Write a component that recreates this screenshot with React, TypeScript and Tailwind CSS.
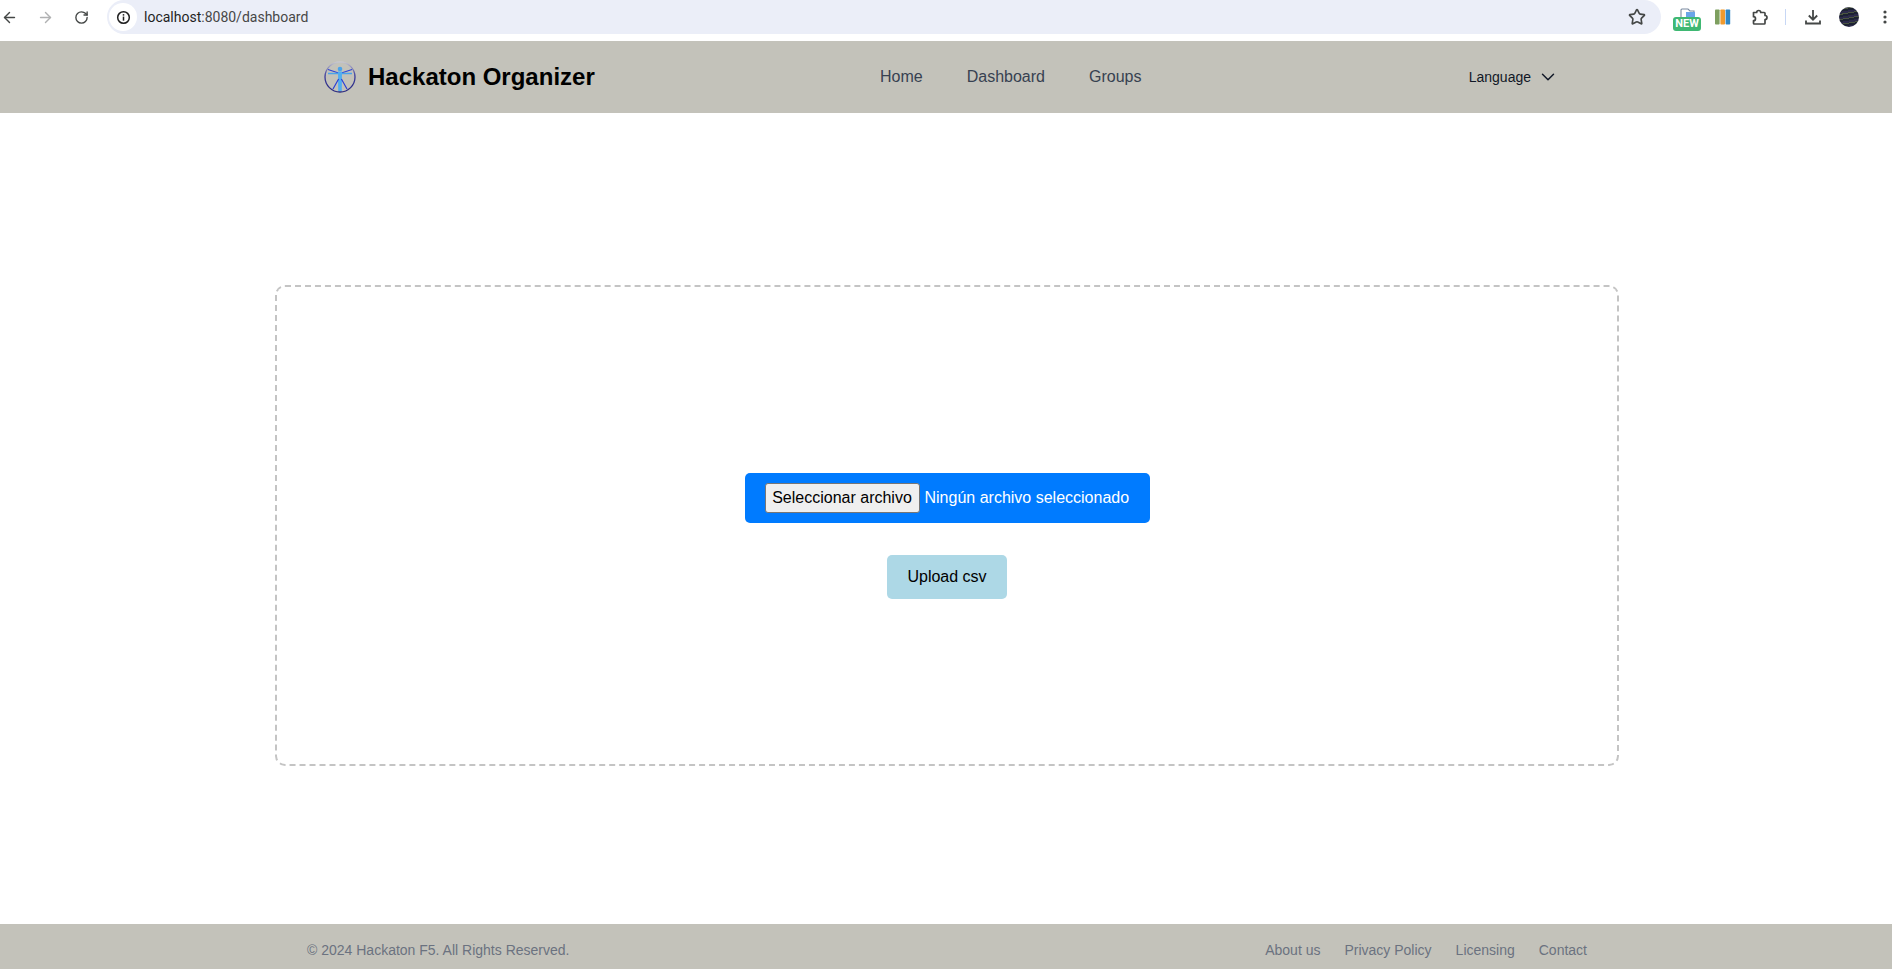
import { ArrowLeft, ArrowRight, RotateCw, Star, ChevronDown } from 'lucide-react';

function BrowserBar() {
  return (
    <div className="h-[41px] pb-[7px] bg-white flex items-center shrink-0 font-['Roboto',sans-serif]">
      <div className="w-[107px] pl-[1px] flex items-center shrink-0">
        <ArrowLeft size={17} strokeWidth={2} className="text-[#444746]" />
        <ArrowRight size={17} strokeWidth={2} className="text-[#b0b1b2] ml-[19px]" />
        <RotateCw size={15} strokeWidth={2.2} className="text-[#444746] ml-[20px]" />
      </div>
      <div className="w-[1554px] h-[34px] rounded-r-full rounded-l-full bg-[#ebeef8] flex items-center pl-[2px] pr-[15px] shrink-0">
        <div className="w-[28px] h-[28px] rounded-full bg-white flex items-center justify-center shrink-0">
          <svg width="15" height="15" viewBox="0 0 16 16" fill="none">
            <circle cx="8" cy="8" r="6.2" stroke="#1f1f1f" strokeWidth="1.6" />
            <rect x="7.2" y="7" width="1.6" height="4.4" fill="#1f1f1f" />
            <rect x="7.2" y="4.4" width="1.6" height="1.6" fill="#1f1f1f" />
          </svg>
        </div>
        <div className="ml-[7px] text-[14px] text-[#1f1f1f]">
          localhost<span className="text-[#474747]">:8080/dashboard</span>
        </div>
        <Star size={18} strokeWidth={2.2} className="ml-auto text-[#444746]" />
      </div>
      {/* extension icons */}
      <div className="ml-[12px] relative w-[28px] h-[28px] shrink-0">
        <svg width="16" height="10" viewBox="0 0 16 10" className="absolute left-[7px] top-[5px]">
          <path d="M1 9V2a1 1 0 0 1 1-1h6l2 2h4v6" fill="none" stroke="#7a8aa0" strokeWidth="1.1" />
          <rect x="6" y="4" width="9" height="6" fill="#6aa5e8" />
        </svg>
        <div className="absolute left-0 top-[14px] w-[28px] h-[14px] rounded-[3px] bg-[#3fb873] text-white text-[11px] leading-[14px] font-bold text-center">
          NEW
        </div>
      </div>
      <svg width="16" height="16" viewBox="0 0 16 16" className="ml-[14px] shrink-0">
        <rect x="0" y="0.5" width="4.6" height="15" rx="0.8" fill="#7d9f5f" />
        <rect x="5.4" y="0.5" width="4.6" height="15" rx="0.8" fill="#f09a2e" />
        <rect x="10.6" y="0.5" width="4.6" height="15" rx="0.8" fill="#2f86c5" />
      </svg>
      <svg width="16" height="16" viewBox="0 0 16 16" fill="none" className="ml-[21px] shrink-0">
        <path
          d="M1.5 3.5h3.2a2 2 0 0 1 4 0h3.5a.8.8 0 0 1 .8.8V6.5a2 2 0 0 1 0 4v3.7a.8.8 0 0 1-.8.8H2.3a.8.8 0 0 1-.8-.8v-2.5a2 2 0 0 0 0-4z"
          stroke="#444746"
          strokeWidth="1.7"
          strokeLinejoin="round"
        />
      </svg>
      <div className="w-[1px] h-[16px] bg-[#c7d7f5] ml-[17px] shrink-0" />
      <svg width="16" height="16" viewBox="0 0 16 16" fill="none" className="ml-[19px] shrink-0">
        <path d="M8 1v9.5M3.8 6.5 8 10.7l4.2-4.2" stroke="#444746" strokeWidth="1.8" />
        <path d="M1 11.5v3h14v-3" stroke="#444746" strokeWidth="1.8" />
      </svg>
      <div className="w-[20px] h-[20px] rounded-full bg-[repeating-linear-gradient(170deg,#2c2a4a_0px,#2c2a4a_2px,#4a5540_2px,#4a5540_3px,#1d2233_3px,#1d2233_5px)] ml-[18px] shrink-0" />
      <svg width="4" height="14" viewBox="0 0 4 14" className="ml-[24px] shrink-0">
        <circle cx="2" cy="2" r="1.6" fill="#444746" />
        <circle cx="2" cy="7" r="1.6" fill="#444746" />
        <circle cx="2" cy="12" r="1.6" fill="#444746" />
      </svg>
    </div>
  );
}

function Logo() {
  return (
    <svg width="34" height="34" viewBox="0 0 34 34" fill="none">
      <defs>
        <linearGradient id="ring" x1="0" y1="0" x2="0" y2="1">
          <stop offset="0" stopColor="#c9c9cf" />
          <stop offset="0.45" stopColor="#3a3a9c" />
          <stop offset="1" stopColor="#2a2a80" />
        </linearGradient>
      </defs>
      <circle cx="17" cy="17" r="15" stroke="url(#ring)" strokeWidth="1.3" />
      <path d="M5 9.5 L17 13.5 L29 9.5" stroke="#2a3fd8" strokeWidth="1.1" />
      <path d="M5 13.5 H29" stroke="#4aa3ea" strokeWidth="1.5" />
      <circle cx="17" cy="9" r="2.3" fill="#4aa3ea" />
      <path d="M15 11.5 H19 L18.8 31 H15.2 Z" fill="#52aef0" />
      <path d="M15.6 19 L10 29 M18.4 19 L24 29" stroke="#2a3fd8" strokeWidth="1.2" />
    </svg>
  );
}

export default function App() {
  return (
    <div className="h-[969px] flex flex-col bg-white overflow-hidden font-['Liberation_Sans',Arial,sans-serif]">
      <BrowserBar />

      <header className="h-[72px] bg-[#c3c2ba] shrink-0 flex items-center justify-center">
        <div className="w-[1280px] ml-[2px] flex items-center">
          <div className="w-[573px] flex items-center pl-[16px] shrink-0">
            <Logo />
            <span className="ml-[11px] text-2xl font-semibold text-black whitespace-nowrap">Hackaton Organizer</span>
          </div>
          <nav className="flex items-center gap-[44px] text-base text-[#374151]">
            <a>Home</a>
            <a>Dashboard</a>
            <a>Groups</a>
          </nav>
          <div className="ml-auto mr-[28px] flex items-center text-sm text-[#111827]">
            Language
            <ChevronDown size={22} strokeWidth={1.6} className="ml-[6px]" />
          </div>
        </div>
      </header>

      <main className="flex-1 flex items-center justify-center pt-[13px] pl-[2px]">
        <div className="w-[1344px] h-[481px] pt-[21px] border-2 border-dashed border-[#c4c4c4] rounded-[10px] flex flex-col items-center justify-center">
          <div className="w-[405px] h-[50px] pl-[20px] bg-[#007bff] rounded-[5px] flex items-center text-white text-base">
            <div className="h-[30px] w-[155px] bg-[#efefef] border border-[#767676] rounded-[3px] text-black flex items-center justify-center shrink-0">
              Seleccionar archivo
            </div>
            <span className="ml-[5px] whitespace-nowrap">Ningún archivo seleccionado</span>
          </div>
          <button className="mt-[32px] w-[120px] h-[44px] bg-[#add8e6] rounded-[5px] text-base text-black">
            Upload csv
          </button>
        </div>
      </main>

      <footer className="h-[45px] pt-[7px] bg-[#c3c2ba] shrink-0 flex items-center justify-center text-sm text-[#6b7280]">
        <div className="w-[1280px] ml-[2px] flex items-center justify-between">
          <span>© 2024 Hackaton F5. All Rights Reserved.</span>
          <div className="flex items-center gap-6">
            <a>About us</a>
            <a>Privacy Policy</a>
            <a>Licensing</a>
            <a>Contact</a>
          </div>
        </div>
      </footer>
    </div>
  );
}
